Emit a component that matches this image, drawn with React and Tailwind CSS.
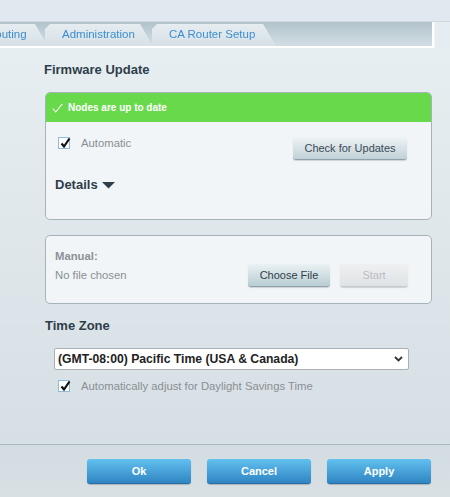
import React from "react";

const Check = () => (
  <span className="relative inline-block w-[12px] h-[12px] border border-[#8fbbdb] bg-white shrink-0">
    <svg
      className="absolute left-[1px] top-[-1px]"
      width="11"
      height="12"
      viewBox="0 0 11 12"
    >
      <path d="M1.5 6.5 L4 9.5 L9.5 1.5" fill="none" stroke="#111" strokeWidth="2.2" />
    </svg>
  </span>
);

const Tab = ({ label, className }) => (
  <div
    className={`h-[22px] flex items-center text-[11.5px] text-[#3c8ed0] bg-gradient-to-b from-[#e6edf1] to-[#d6e0e5] [clip-path:polygon(0_100%,0_5px,5px_0,calc(100%_-_13px)_0,100%_100%)] ${className}`}
  >
    {label}
  </div>
);

const GrayButton = ({ children, className }) => (
  <button
    className={`h-[23px] rounded-[3px] text-[11px] border-b border-[#8fa2ab] shadow-[0_1px_1px_rgba(0,0,0,0.15)] ${className}`}
  >
    {children}
  </button>
);

const BlueButton = ({ children }) => (
  <button className="w-[104px] h-[25px] rounded-[3px] text-white font-bold text-[11px] bg-gradient-to-b from-[#62c1ef] to-[#2f85c3] border-b border-[#246ea4] shadow-[0_1px_1px_rgba(0,0,0,0.2)]">
    {children}
  </button>
);

export default function App() {
  return (
    <div className="w-[450px] h-[497px] overflow-hidden flex flex-col font-['Liberation_Sans',Arial,sans-serif] bg-[#e5ecf0]">
      {/* top strip */}
      <div className="h-[22px] shrink-0 bg-[#e0e9ef] border-b border-[#cfd9df]" />

      {/* tab bar */}
      <div className="h-[26px] shrink-0 flex">
        <div className="w-[434px] h-[26px] border-r-2 border-b-2 border-white bg-gradient-to-b from-[#b2c3cc] to-[#d3dee4] flex items-end [filter:drop-shadow(1px_0_0_#f1f5f7)_drop-shadow(-1px_0_0_#f1f5f7)]">
          <Tab label="Routing" className="ml-[-42px] w-[90px] pl-[29px]" />
          <Tab label="Administration" className="ml-[-3px] w-[108px] pl-[17px]" />
          <Tab label="CA Router Setup" className="ml-[-1px] w-[124px] pl-[17px]" />
        </div>
        <div className="flex-1 bg-[#e6edf0]" />
      </div>

      {/* settings */}
      <div className="flex-1 flex flex-col pl-[45px] pr-[18px] pt-[14px] bg-gradient-to-b from-[#e7eef1] to-[#d6dfe4]">
        <h2 className="text-[13px] leading-[16px] font-bold text-[#2d3d49] -ml-px">Firmware Update</h2>

        <div className="mt-[14px] border border-[#a6b3bb] rounded-[5px] bg-[#f1f5f8] overflow-hidden">
          <div className="h-[29px] bg-[#68d94b] flex items-center pl-[6px] gap-[5px]">
            <svg width="11" height="10" viewBox="0 0 11 10">
              <path d="M0.8 5.5 L3.8 9 L10.2 0.8" fill="none" stroke="#fff" strokeWidth="1.1" />
            </svg>
            <span className="text-[10px] font-bold text-white">Nodes are up to date</span>
          </div>
          <div className="pt-[15px] pl-[12px] pr-[24px] pb-[26px]">
            <div className="flex justify-between items-start">
              <div className="flex items-center gap-[11px] h-[12px]">
                <Check />
                <span className="text-[11.3px] text-[#8a8f94]">Automatic</span>
              </div>
              <GrayButton className="w-[114px] text-[#3a4a55] bg-gradient-to-b from-[#eef3f5] to-[#c2d2d8]">
                Check for Updates
              </GrayButton>
            </div>
            <div className="mt-[17px] -ml-[3px] flex items-center gap-[4px] h-[16px]">
              <span className="text-[13px] font-bold text-[#2d3d49]">Details</span>
              <svg width="13" height="7" viewBox="0 0 13 7">
                <polygon points="0,0 13,0 6.5,6.5" fill="#2d3d49" />
              </svg>
            </div>
          </div>
        </div>

        <div className="mt-[15px] border border-[#a6b3bb] rounded-[5px] bg-[#f1f5f8] pt-[13px] pl-[9px] pr-[23px] pb-[16px]">
          <div className="h-[14px] leading-[14px] text-[11.3px] font-bold text-[#8c9196]">Manual:</div>
          <div className="mt-px flex items-center">
            <span className="flex-1 text-[11.3px] text-[#8a8f94]">No file chosen</span>
            <GrayButton className="w-[82px] text-[#2f3e48] bg-gradient-to-b from-[#eaf2f4] to-[#b9cdd4]">
              Choose File
            </GrayButton>
            <GrayButton className="ml-[10px] w-[68px] text-[#b9bdc1] bg-gradient-to-b from-[#eef0f1] to-[#e0e3e5] border-[#c5cacd]">
              Start
            </GrayButton>
          </div>
        </div>

        <h2 className="mt-[14px] text-[13px] leading-[16px] font-bold text-[#2d3d49]">Time Zone</h2>

        <div className="mt-[14px] ml-[9px] w-[355px] h-[22px] bg-white border border-[#a9b1b6] rounded-[2px] flex items-center justify-between pl-[3px] pr-[5px]">
          <span className="text-[12.2px] font-bold text-[#222]">(GMT-08:00) Pacific Time (USA &amp; Canada)</span>
          <svg width="9" height="6" viewBox="0 0 9 6">
            <path d="M1 1 L4.5 4.5 L8 1" fill="none" stroke="#333" strokeWidth="1.8" />
          </svg>
        </div>

        <div className="mt-[10px] ml-[13px] flex items-center gap-[11px] h-[12px]">
          <Check />
          <span className="text-[11.3px] text-[#8a8f94]">Automatically adjust for Daylight Savings Time</span>
        </div>
      </div>

      {/* footer actions */}
      <div className="h-[53px] shrink-0 border-t border-[#a9b7bf] bg-gradient-to-b from-[#d3dce1] to-[#d8e0e4] flex justify-end gap-[16px] pr-[19px] pt-[14px]">
        <BlueButton>Ok</BlueButton>
        <BlueButton>Cancel</BlueButton>
        <BlueButton>Apply</BlueButton>
      </div>
    </div>
  );
}
